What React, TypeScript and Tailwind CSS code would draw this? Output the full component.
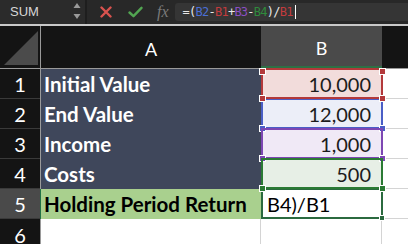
import React from "react";

const lato = { fontFamily: "Lato, 'Open Sans', sans-serif" };

type Handle = { left: number; top: number };

function Overlay({
  color,
  z,
  handles,
  size = 7,
}: {
  color: string;
  z: number;
  handles: Handle[];
  size?: number;
}) {
  return (
    <>
      <div
        className="pointer-events-none absolute -top-px left-0 w-[122px] h-[31px] border-2"
        style={{ borderColor: color, zIndex: z }}
      />
      {handles.map((h, i) => (
        <div
          key={i}
          className="pointer-events-none absolute border border-white"
          style={{ left: h.left, top: h.top, width: size, height: size, background: color, zIndex: z }}
        />
      ))}
    </>
  );
}

function RowHead({ n, active }: { n: number; active?: boolean }) {
  return (
    <>
      <div
        className={`w-[40px] h-full flex items-center justify-center text-[20px] text-white border-b border-[#3a3a3a] ${
          active ? "bg-[#4a4a4a]" : "bg-[#141414]"
        }`}
        style={lato}
      >
        <span className="pt-[1px]">{n}</span>
      </div>
      <div className={`w-px h-full ${active ? "bg-[#217346]" : "bg-[#9a9a9a]"}`} />
    </>
  );
}

const rows = [
  { label: "Initial Value", value: "10,000", bg: "bg-[#f2dcdb]", color: "#b3393b", z: 30 },
  { label: "End Value", value: "12,000", bg: "bg-[#eceef8]", color: "#4a5ec6", z: 20 },
  { label: "Income", value: "1,000", bg: "bg-[#f0e9f6]", color: "#7d47b3", z: 40 },
  { label: "Costs", value: "500", bg: "bg-[#e7efe6]", color: "#2b7a34", z: 50 },
];

export default function App() {
  return (
    <div className="w-[408px] h-[244px] overflow-hidden bg-white flex flex-col select-none">
      {/* Toolbar */}
      <div className="h-[24px] flex bg-[#282828] shrink-0">
        <div className="w-[85px] flex items-center justify-between pl-[10px] pr-[4px] bg-[#2b2b2b]">
          <span className="text-[13px] text-[#d6d6d6]" style={{ fontFamily: "'Liberation Sans', Arial, sans-serif" }}>
            SUM
          </span>
          <svg width="8" height="18" viewBox="0 0 8 18">
            <polygon points="4,0 7.5,5 0.5,5" fill="#9a9a9a" />
            <polygon points="0.5,11 7.5,11 4,16" fill="#9a9a9a" />
          </svg>
        </div>
        <div className="w-[2px] bg-[#1e1e1e]" />
        <div className="flex items-center pl-[13px]">
          <svg width="12" height="12" viewBox="0 0 12 12">
            <path d="M1.5 1.5 L10.5 10.5 M10.5 1.5 L1.5 10.5" stroke="#d9534f" strokeWidth="2.4" strokeLinecap="round" />
          </svg>
          <svg className="ml-[16px]" width="15" height="12" viewBox="0 0 15 12">
            <path d="M1.5 6.5 L5.5 10.2 L13.5 1.8" stroke="#52a552" strokeWidth="2.4" fill="none" strokeLinecap="round" strokeLinejoin="round" />
          </svg>
          <span
            className="ml-[14px] text-[16px] italic text-[#7a7a7a] leading-none"
            style={{ fontFamily: "'Liberation Serif', 'DejaVu Serif', serif" }}
          >
            fx
          </span>
        </div>
        <div className="flex-1 ml-[6px] my-[3px] bg-[#353535] rounded-l-[3px] flex items-center pl-[8px]">
          <span
            className="text-[12px] tracking-[-0.75px] text-[#e8e8e8] whitespace-pre"
            style={{ fontFamily: "'DejaVu Sans Mono', monospace" }}
          >
            =(<span className="text-[#4b6fd6]">B2</span>-<span className="text-[#c23b3d]">B1</span>+
            <span className="text-[#8b4fc4]">B3</span>-<span className="text-[#2f8a3c]">B4</span>)/
            <span className="text-[#c23b3d]">B1</span>
          </span>
          <div className="w-px h-[14px] bg-white ml-[2px]" />
        </div>
      </div>
      <div className="h-[2px] bg-[#c9c9c9] shrink-0" />

      {/* Column headers */}
      <div className="h-[42px] flex shrink-0 bg-[#141414]">
        <div className="w-[40px] h-full relative">
          <svg width="40" height="42" viewBox="0 0 40 42">
            <polygon points="4,39 38,5 38,39" fill="#4b4b4b" />
          </svg>
        </div>
        <div className="w-px h-full bg-[#9a9a9a]" />
        <div className="w-[220px] flex items-center justify-center text-[18px] text-white pt-[5px]" style={lato}>
          A
        </div>
        <div
          className="w-[121px] flex items-center justify-center text-[18px] text-white bg-[#4a4a4a] border-b-2 border-[#2d7045] pt-[5px]"
          style={lato}
        >
          B
        </div>
        <div className="flex-1" />
      </div>
      <div className="h-px bg-[#9a9a9a] shrink-0" />

      {/* Data rows */}
      {rows.map((r, i) => (
        <div key={r.label} className="h-[30px] flex shrink-0">
          <RowHead n={i + 1} />
          <div
            className="w-[220px] h-full bg-[#3f475b] flex items-center pl-[3px] text-[20.5px] font-bold text-white"
            style={lato}
          >
            {r.label}
          </div>
          <div
            className={`relative w-[121px] h-full ${r.bg} flex items-center justify-end pr-[11px] text-[20px] text-[#1c1c1c]`}
            style={lato}
          >
            {r.value}
            <Overlay
              color={r.color}
              z={r.z}
              handles={
                i === 0
                  ? [
                      { left: -2, top: -1 },
                      { left: 118, top: -1 },
                      { left: -2, top: 26 },
                      { left: 118, top: 26 },
                    ]
                  : [
                      { left: -2, top: 26 },
                      { left: 118, top: 26 },
                    ]
              }
            />
          </div>
          <div className="flex-1 h-full bg-white border-b border-[#d4d4d4]" />
        </div>
      ))}

      {/* Row 5 */}
      <div className="h-[30px] flex shrink-0">
        <RowHead n={5} active />
        <div
          className="w-[220px] h-full bg-[#a9d08e] flex items-center pl-[3px] text-[20.5px] font-bold text-black"
          style={lato}
        >
          Holding Period Return
        </div>
        <div className="relative w-[121px] h-full bg-white flex items-center pl-[6px] text-[20px] text-black" style={lato}>
          B4)/B1
          <div
            className="pointer-events-none absolute -top-px left-0 w-[122px] h-[31px] border-2 border-[#2b6a3f]"
            style={{ zIndex: 10 }}
          />
          <div
            className="pointer-events-none absolute left-[118px] top-[26px] w-[6px] h-[6px] bg-[#2b6a3f] border border-white"
            style={{ zIndex: 10 }}
          />
        </div>
        <div className="flex-1 h-full bg-white border-b border-[#d4d4d4]" />
      </div>

      {/* Row 6 */}
      <div className="flex-1 flex">
        <RowHead n={6} />
        <div className="w-[220px] h-full bg-white border-r border-[#d4d4d4]" />
        <div className="w-[121px] h-full bg-white border-r border-[#d4d4d4]" />
        <div className="flex-1 h-full bg-white" />
      </div>
    </div>
  );
}
